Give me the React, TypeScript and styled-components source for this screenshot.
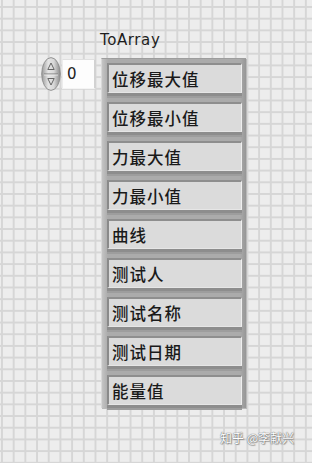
import React from "react";
import styled, { createGlobalStyle } from "styled-components";

const Global = createGlobalStyle`
  html, body { margin: 0; padding: 0; background: #ececec; }
  #root { width: 312px; height: 463px; }
`;

const Canvas = styled.div`
  position: relative;
  width: 312px;
  height: 463px;
  box-sizing: border-box;
  padding: 31px 0 0 41px;
  overflow: hidden;
  background-color: #ededed;
  background-image:
    linear-gradient(to right, #d6d6d6 0 1.6px, transparent 1.6px),
    linear-gradient(to bottom, #d6d6d6 0 1.6px, transparent 1.6px);
  background-size: 11.7px 11.7px;
  background-position: 1px 6px;
  font-family: "DejaVu Sans", "Noto Sans CJK SC", sans-serif;
`;

const Column = styled.div`
  display: flex;
  flex-direction: column;
`;

const Label = styled.div`
  margin-left: 59px;
  font-family: "DejaVu Sans", sans-serif;
  font-size: 15px;
  line-height: 18px;
  letter-spacing: 0.6px;
  color: #1e1e1e;
  margin-bottom: 9px;
`;

const Row = styled.div`
  display: flex;
  align-items: flex-start;
`;

const IndexControl = styled.div`
  width: 60px;
  display: flex;
  align-items: flex-start;
  margin-top: -1px;
`;

const Spinner = styled.div`
  width: 20px;
  height: 34px;
  display: flex;
`;

const NumField = styled.div`
  margin-top: 2px;
  margin-left: 1px;
  width: 34px;
  height: 30px;
  box-sizing: border-box;
  background: #fdfdfd;
  border-top: 1px solid #e0e0e0;
  border-left: 1px solid #ededed;
  border-right: 2px solid #d2d2d2;
  border-bottom: 1px solid #f4f4f4;
  display: flex;
  align-items: center;
  padding-left: 4px;
  font-family: "DejaVu Sans", sans-serif;
  font-size: 15px;
  color: #222;
`;

const ArrayFrame = styled.div`
  width: 145px;
  box-sizing: border-box;
  padding: 4px 4px 3px 5px;
  background: linear-gradient(to right, #c4c4c4 0, #ababab 6px, #ababab 138px, #939393 145px);
  border-top: 1px solid #9d9d9d;
  border-left: 1px solid #d8d8d8;
  box-shadow: 1px 1px 0 #b9b9b9;
  display: flex;
  flex-direction: column;
  gap: 9px;
`;

const Element = styled.div`
  position: relative;
  height: 30px;
  box-sizing: border-box;
  background: #dbdbdb;
  border-top: 2px solid #8e8e8e;
  border-left: 2px solid #8a8a8a;
  border-right: 1px solid #efefef;
  border-bottom: 1px solid #e6e6e6;
  box-shadow: 0 3px 0 #8d8d8d, 0 5px 0 #9d9d9d;
  display: flex;
  align-items: center;
  padding-left: 3px;
  font-family: "Noto Sans CJK SC", sans-serif;
  font-size: 16.5px;
  font-weight: 500;
  letter-spacing: 1px;
  color: #1a1a1a;
  white-space: nowrap;
`;

const Watermark = styled.div`
  position: absolute;
  left: 220px;
  top: 430px;
  font-family: "Noto Sans CJK SC", sans-serif;
  font-size: 12px;
  line-height: 16px;
  color: #ffffff;
  text-shadow: 0 0 1px #666, 0 0 1px #777, 1px 1px 1px #999;
  white-space: nowrap;
`;

const items = [
  "位移最大值",
  "位移最小值",
  "力最大值",
  "力最小值",
  "曲线",
  "测试人",
  "测试名称",
  "测试日期",
  "能量值",
];

function SpinIcon() {
  return (
    <svg width="20" height="34" viewBox="0 0 20 34">
      <defs>
        <linearGradient id="sg" x1="0" x2="1" y1="0" y2="0">
          <stop offset="0" stopColor="#9a9a9a" />
          <stop offset="0.35" stopColor="#e4e4e4" />
          <stop offset="0.65" stopColor="#d8d8d8" />
          <stop offset="1" stopColor="#8a8a8a" />
        </linearGradient>
      </defs>
      <ellipse cx="10" cy="17" rx="9.3" ry="16.4" fill="url(#sg)" stroke="#8a8a8a" strokeWidth="0.9" />
      <line x1="3" y1="17" x2="17" y2="17" stroke="#7a7a7a" strokeWidth="1" />
      <line x1="3" y1="18" x2="17" y2="18" stroke="#f2f2f2" strokeWidth="0.8" />
      <path d="M10 6 L13.2 12.5 L6.8 12.5 Z" fill="none" stroke="#666" strokeWidth="1" />
      <path d="M10 28 L13.2 21.5 L6.8 21.5 Z" fill="none" stroke="#666" strokeWidth="1" />
    </svg>
  );
}

export default function App() {
  return (
    <>
      <Global />
      <Canvas>
        <Column>
          <Label>ToArray</Label>
          <Row>
            <IndexControl>
              <Spinner>
                <SpinIcon />
              </Spinner>
              <NumField>0</NumField>
            </IndexControl>
            <ArrayFrame>
              {items.map((t) => (
                <Element key={t}>{t}</Element>
              ))}
            </ArrayFrame>
          </Row>
        </Column>
        <Watermark>知乎 @李献兴</Watermark>
      </Canvas>
    </>
  );
}
